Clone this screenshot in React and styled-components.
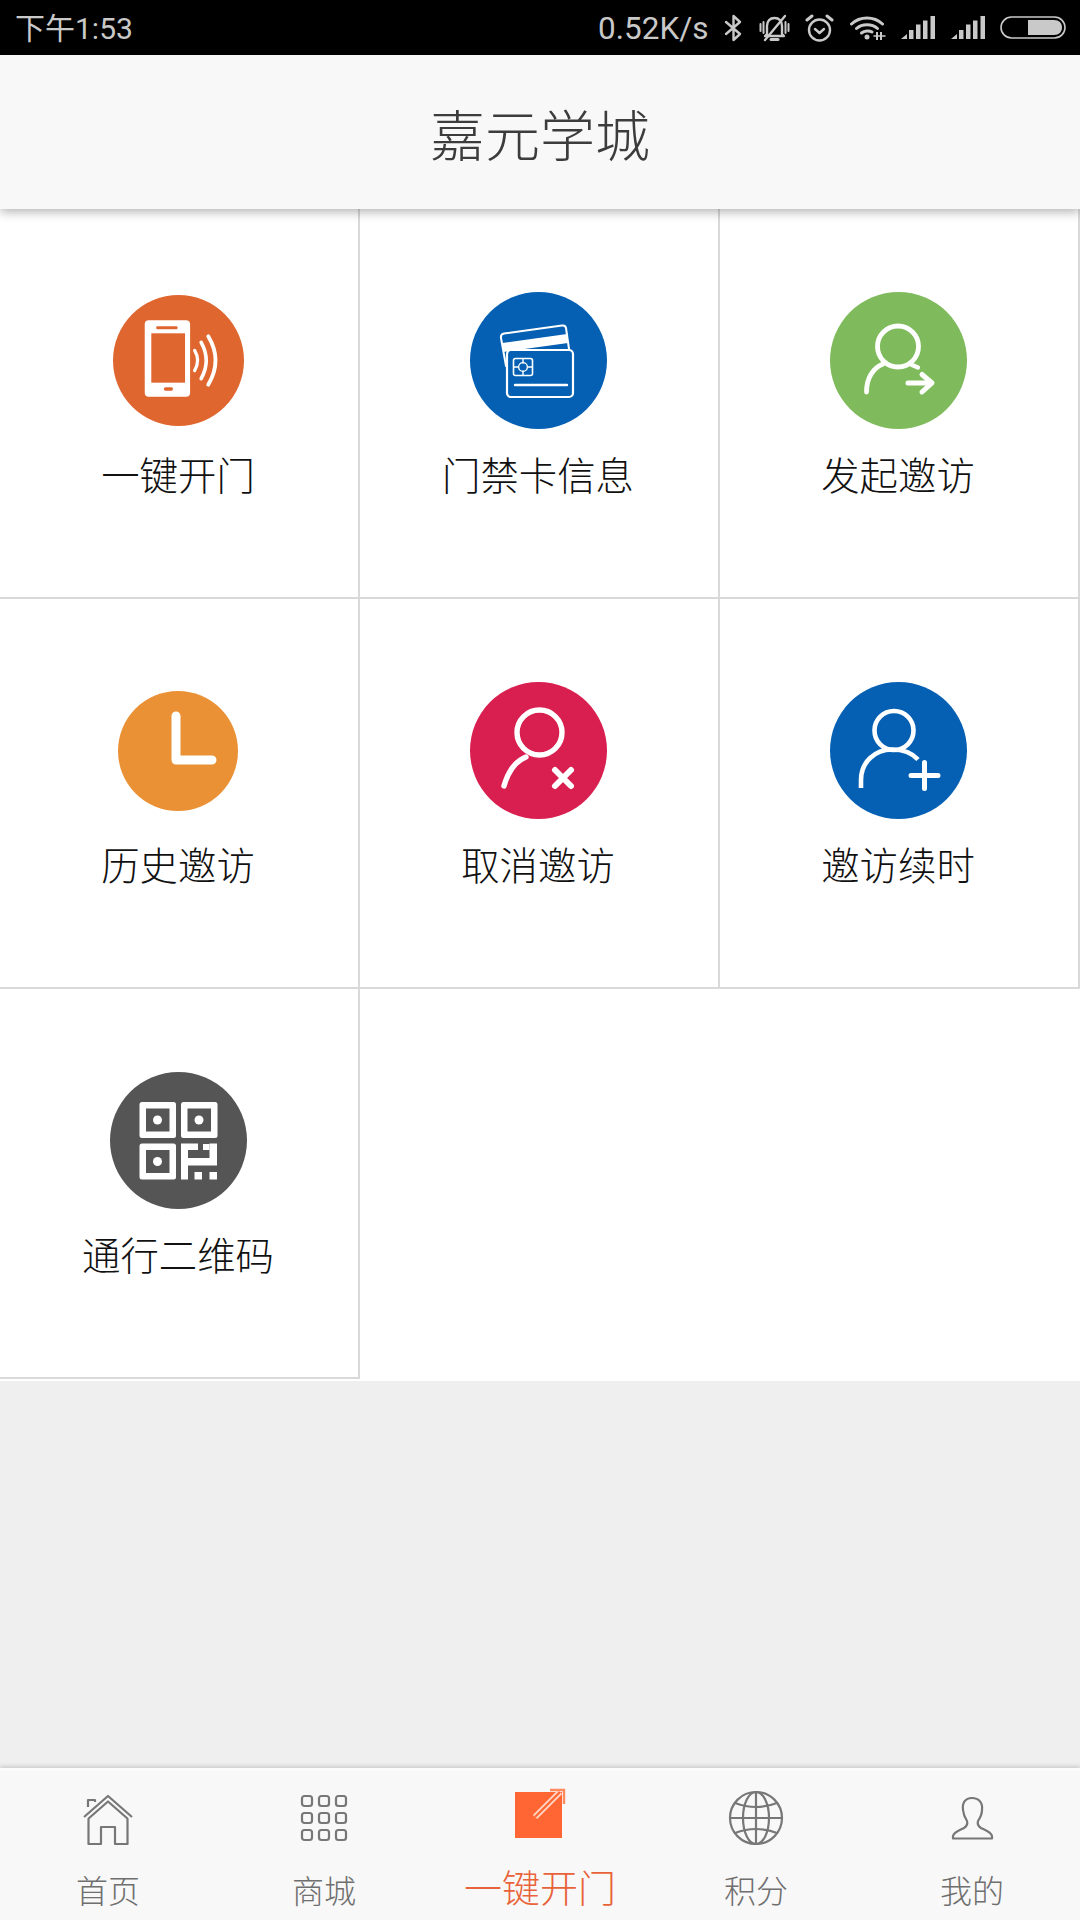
import React from "react";
import styled, { createGlobalStyle } from "styled-components";

const GlobalStyle = createGlobalStyle`
  html, body {
    margin: 0;
    padding: 0;
    background: #efefef;
  }
  * {
    box-sizing: border-box;
  }
`;

const FONT = `Roboto, "Noto Sans CJK SC", sans-serif`;

const Page = styled.div`
  width: 1080px;
  height: 1920px;
  display: flex;
  flex-direction: column;
  overflow: hidden;
  background: #efefef;
  font-family: ${FONT};
`;

const StatusBar = styled.div`
  height: 55px;
  flex: none;
  background: #000;
  color: #c9c9c9;
  display: flex;
  align-items: center;
  justify-content: space-between;
  padding: 0 14px 0 15px;
  font-size: 30px;
`;

const StatusGroup = styled.div`
  display: flex;
  align-items: center;
  gap: 15.5px;
`;

const StatusText = styled.span`
  padding-top: 2px;
  line-height: 53px;
  font-size: ${(p) => p.$size || 30}px;
`;

const Header = styled.header`
  position: relative;
  z-index: 1;
  height: 154px;
  flex: none;
  background: #f8f8f8;
  box-shadow: 0 3px 10px rgba(0, 0, 0, 0.3);
  display: flex;
  align-items: center;
  justify-content: center;
  color: #3c3c3c;
  font-size: 55px;
  font-weight: 300;
  font-family: "Noto Sans CJK SC", sans-serif;
`;

const Grid = styled.div`
  display: grid;
  grid-template-columns: repeat(3, 360px);
  grid-auto-rows: 390px;
  flex: none;
  height: 1172px;
  background: #fff;
`;

const Cell = styled.div`
  display: flex;
  flex-direction: column;
  align-items: center;
  padding: 83px 2px 0 0;
  border-right: 2px solid #d9d9d9;
  border-bottom: 2px solid #d9d9d9;
  background: #fff;
`;

const IconSlot = styled.div`
  height: 137px;
  display: flex;
  align-items: center;
  justify-content: center;
`;

const Circle = styled.div`
  width: ${(p) => p.$size}px;
  height: ${(p) => p.$size}px;
  border-radius: 50%;
  background: ${(p) => p.$color};
  svg {
    display: block;
  }
`;

const CellLabel = styled.div`
  margin-top: 19px;
  font-family: "Noto Sans CJK SC", sans-serif;
  font-size: 38.4px;
  line-height: 50px;
  font-weight: 300;
  color: #111;
`;

const Filler = styled.div`
  flex: 1;
`;

const TabBar = styled.nav`
  height: 152px;
  flex: none;
  display: grid;
  grid-template-columns: repeat(5, 216px);
  background: #f8f8f8;
  border-top: 3px solid #fbfbfb;
  box-shadow: 0 -2px 4px rgba(0, 0, 0, 0.14);
  padding-top: 17px;
`;

const Tab = styled.div`
  display: flex;
  flex-direction: column;
  align-items: center;
  svg {
    display: block;
  }
`;

const TabLabel = styled.div`
  margin-top: ${(p) => (p.$active ? "16px" : "19px")};
  font-family: "Noto Sans CJK SC", sans-serif;
  font-size: ${(p) => (p.$active ? "38px" : "32px")};
  line-height: 44px;
  font-weight: 300;
  color: ${(p) => (p.$active ? "#e9633a" : "#6f6f6f")};
`;

const line = { fill: "none", stroke: "#fff", strokeLinecap: "round", strokeLinejoin: "round" };
const grey = { fill: "none", stroke: "#777", strokeWidth: 2.2, strokeLinejoin: "round" };
const bar = { fill: "none", stroke: "#c9c9c9", strokeWidth: 2.4, strokeLinecap: "round", strokeLinejoin: "round" };

function BluetoothIcon() {
  return (
    <svg width="19" height="28" viewBox="0 0 19 28">
      <path d="M2 8 L16 20 L9.5 26 V2 L16 8 L2 20" {...bar} />
    </svg>
  );
}

function BellOffIcon() {
  return (
    <svg width="31" height="30" viewBox="0 0 31 30">
      <path d="M8 21 V13 C8 8 11 5 15.5 5 C20 5 23 8 23 13 V21 L25 23 H6 Z" {...bar} />
      <path d="M12 26.5 H19" {...bar} strokeWidth="3" />
      <path d="M1.5 11 V18 M4.5 9 V20 M26.5 9 V20 M29.5 11 V18" {...bar} strokeWidth="2" />
      <path d="M6 27 L26 3" {...bar} />
    </svg>
  );
}

function AlarmIcon() {
  return (
    <svg width="29" height="28" viewBox="0 0 29 28">
      <circle cx="14.5" cy="16" r="10.5" {...bar} />
      <path d="M10 15 L14.5 19 L19 15" {...bar} />
      <path d="M2 6 L7 2 M27 6 L22 2" {...bar} strokeWidth="3" />
    </svg>
  );
}

function WifiIcon() {
  return (
    <svg width="36" height="25" viewBox="0 0 36 25">
      <path d="M1.5 9 C10 1 24 1 32.5 9" {...bar} strokeWidth="3" />
      <path d="M6.5 13.5 C12 8.5 22 8.5 27.5 13.5" {...bar} strokeWidth="3" />
      <path d="M11.5 18 C14.5 15.5 19.5 15.5 22 17" {...bar} strokeWidth="3" />
      <circle cx="17" cy="22" r="2.5" fill="#c9c9c9" />
      <path d="M27 17 V25 M31 17 V25" {...bar} strokeWidth="2" strokeLinecap="butt" />
      <path d="M24 21 H35" {...bar} strokeWidth="1.5" />
    </svg>
  );
}

function SignalIcon() {
  return (
    <svg width="34" height="23" viewBox="0 0 34 23" fill="#c9c9c9">
      <path d="M0 23 L6 18 V23 Z" />
      <rect x="8" y="14" width="4.5" height="9" />
      <rect x="15" y="8.5" width="4.5" height="14.5" />
      <rect x="22" y="4.5" width="4.5" height="18.5" />
      <rect x="29.5" y="0" width="4.5" height="23" />
    </svg>
  );
}

function BatteryIcon() {
  return (
    <svg width="66" height="23" viewBox="0 0 66 23">
      <rect x="1" y="1" width="64" height="21" rx="10.5" fill="none" stroke="#c9c9c9" strokeWidth="1.6" />
      <path d="M28 4 H54 C59 4 62 7 62 11.5 C62 16 59 19 54 19 H28 Z" fill="#c9c9c9" />
    </svg>
  );
}

function PhoneIcon() {
  return (
    <svg width="131" height="131" viewBox="0 0 130 130">
      <rect x="31.5" y="25" width="45" height="76" rx="4" fill="#fff" />
      <rect x="38" y="38" width="33.5" height="49" fill="#e0662f" />
      <rect x="43" y="31" width="21" height="3" rx="1" fill="#e0662f" />
      <rect x="50.5" y="91.5" width="9" height="3.4" rx="1.5" fill="#e0662f" />
      <path d="M81 55 Q87 65 81 75" {...line} strokeWidth="3.2" />
      <path d="M87.5 47 Q97.5 65 87.5 83" {...line} strokeWidth="3.6" />
      <path d="M94.5 41 Q109 65 94.5 89" {...line} strokeWidth="3.8" />
    </svg>
  );
}

function CardsIcon() {
  return (
    <svg width="137" height="137" viewBox="0 0 137 137">
      <path d="M36 74 L31 46 Q30.5 42 34 41.5 L92 33.5 Q95.5 33 96 36 L99 57" {...line} strokeWidth="2" />
      <path d="M32 51 L97 42 L98 51 L33.5 60 Z" fill="#fff" />
      <rect x="37" y="58" width="66" height="47" rx="4" fill="#0560b4" stroke="#fff" strokeWidth="2.2" />
      <rect x="43.5" y="66.5" width="19" height="17" rx="2" {...line} strokeWidth="1.6" />
      <path d="M53 67 V71 M53 79 V83 M44 75 H48 M58 75 H62" {...line} strokeWidth="1.4" />
      <circle cx="53" cy="75" r="4.4" {...line} strokeWidth="1.4" />
      <path d="M45 93 H97" {...line} strokeWidth="2.4" />
    </svg>
  );
}

function InviteIcon() {
  return (
    <svg width="137" height="137" viewBox="0 0 137 137">
      <circle cx="68" cy="54.5" r="20.5" {...line} strokeWidth="4.8" />
      <path d="M36.5 100 C36.5 86 43 76 53 72" {...line} strokeWidth="4.8" />
      <path d="M82 73 L88 75.5" {...line} strokeWidth="4.4" />
      <path d="M78 91 H101 M92 82.5 L102 91 L92 100" {...line} strokeWidth="5" />
    </svg>
  );
}

function ClockIcon() {
  return (
    <svg width="120" height="120" viewBox="0 0 120 120">
      <path d="M58 25 V69 H94" {...line} strokeWidth="9" />
    </svg>
  );
}

function CancelIcon() {
  return (
    <svg width="137" height="137" viewBox="0 0 137 137">
      <circle cx="69.5" cy="50.5" r="22.5" {...line} strokeWidth="5.4" />
      <path d="M34 104 C38 90 46 79 56 75" {...line} strokeWidth="5.4" />
      <path d="M85 88 L101 104 M101 88 L85 104" {...line} strokeWidth="6" />
    </svg>
  );
}

function RenewIcon() {
  return (
    <svg width="137" height="137" viewBox="0 0 137 137">
      <circle cx="64" cy="48.5" r="19.5" {...line} strokeWidth="4.6" />
      <path d="M31 106 V98 C31 80 45 67.5 62 67.5 C72 67.5 82 71 88 77.5" {...line} strokeWidth="4.6" strokeLinecap="butt" />
      <path d="M81 93.5 H108 M94.5 80.5 V106.5" {...line} strokeWidth="5" />
    </svg>
  );
}

function QrIcon() {
  const finders = [
    [29.5, 30],
    [71, 30],
    [29.5, 71.5],
  ];
  return (
    <svg width="137" height="137" viewBox="0 0 137 137" fill="#fff">
      {finders.map(([x, y]) => (
        <g key={`${x}-${y}`}>
          <rect x={x} y={y} width="36.5" height="36" rx="2.5" />
          <rect x={x + 6.5} y={y + 6.5} width="23.5" height="23" fill="#555" />
          <circle cx={x + 18} cy={y + 18} r="4.5" />
        </g>
      ))}
      <path d="M71 71.5 H88 V78 H78 V86 H99.5 V71.5 H107 V93.5 H78 V107.5 H71 Z" />
      <rect x="93" y="72" width="6.5" height="6" />
      <rect x="84.5" y="100" width="7.5" height="7.5" />
      <rect x="99.5" y="100" width="7.5" height="7.5" />
    </svg>
  );
}

function HomeTabIcon() {
  return (
    <svg width="60" height="60" viewBox="0 0 60 60">
      <path d="M6 29 L30 8 L54 29" {...grey} />
      <path d="M10 31 L30 13.5 L50 31" {...grey} />
      <path d="M10 19 V12 H17 V14" {...grey} />
      <path d="M10.5 31 V56 H23 V39 H37 V56 H49.5 V31" {...grey} />
    </svg>
  );
}

function GridTabIcon() {
  const spots = [8, 25, 42];
  return (
    <svg width="60" height="60" viewBox="0 0 60 60">
      {spots.map((y) =>
        spots.map((x) => (
          <rect key={`${x}-${y}`} x={x} y={y} width="10" height="10" rx="2.5" {...grey} />
        ))
      )}
    </svg>
  );
}

function OpenTabIcon() {
  return (
    <svg width="60" height="60" viewBox="0 0 60 60">
      <rect x="5" y="4" width="47" height="46" fill="#ff6633" />
      <path d="M25 29 L50 4" fill="none" stroke="#ffd9c8" strokeWidth="6" />
      <path d="M25 29 L50 4" fill="none" stroke="#ff6633" strokeWidth="2.4" />
      <path d="M40 2 H54 V16" fill="none" stroke="#ff8a60" strokeWidth="2.4" />
    </svg>
  );
}

function GlobeTabIcon() {
  return (
    <svg width="60" height="60" viewBox="0 0 60 60">
      <circle cx="30" cy="30" r="26" {...grey} />
      <ellipse cx="30" cy="30" rx="13" ry="26" {...grey} />
      <path d="M30 4 V56 M4 30 H56" {...grey} />
      <path d="M9 15 Q30 23 51 15 M9 45 Q30 37 51 45" {...grey} />
    </svg>
  );
}

function UserTabIcon() {
  return (
    <svg width="60" height="60" viewBox="0 0 60 60">
      <path
        d="M30 10 C23 10 20 15 21 22 C21.5 27 23 30 25 33 C26 36 25 38 22 40 C18 42 12 44 11 48 L11 50.5 H50 L50 48 C49 44 43 42 39 40 C36 38 35 36 36 33 C38 30 40 27 40 22 C41 15 37 10 30 10 Z"
        {...grey}
      />
    </svg>
  );
}

const cells = [
  { label: "一键开门", color: "#e0662f", size: 131, Icon: PhoneIcon },
  { label: "门禁卡信息", color: "#0560b4", size: 137, Icon: CardsIcon },
  { label: "发起邀访", color: "#7fbb5c", size: 137, Icon: InviteIcon },
  { label: "历史邀访", color: "#ea9135", size: 120, Icon: ClockIcon },
  { label: "取消邀访", color: "#d81f4f", size: 137, Icon: CancelIcon },
  { label: "邀访续时", color: "#0560b4", size: 137, Icon: RenewIcon },
  { label: "通行二维码", color: "#555", size: 137, Icon: QrIcon },
];

const tabs = [
  { label: "首页", Icon: HomeTabIcon },
  { label: "商城", Icon: GridTabIcon },
  { label: "一键开门", Icon: OpenTabIcon, active: true },
  { label: "积分", Icon: GlobeTabIcon },
  { label: "我的", Icon: UserTabIcon },
];

export default function App() {
  return (
    <Page>
      <GlobalStyle />
      <StatusBar>
        <StatusText>下午1:53</StatusText>
        <StatusGroup>
          <StatusText $size={31.5}>0.52K/s</StatusText>
          <BluetoothIcon />
          <BellOffIcon />
          <AlarmIcon />
          <WifiIcon />
          <SignalIcon />
          <SignalIcon />
          <BatteryIcon />
        </StatusGroup>
      </StatusBar>
      <Header>嘉元学城</Header>
      <Grid>
        {cells.map(({ label, color, size, Icon }) => (
          <Cell key={label}>
            <IconSlot>
              <Circle $size={size} $color={color}>
                <Icon />
              </Circle>
            </IconSlot>
            <CellLabel>{label}</CellLabel>
          </Cell>
        ))}
      </Grid>
      <Filler />
      <TabBar>
        {tabs.map(({ label, Icon, active }) => (
          <Tab key={label}>
            <Icon />
            <TabLabel $active={active}>{label}</TabLabel>
          </Tab>
        ))}
      </TabBar>
    </Page>
  );
}
